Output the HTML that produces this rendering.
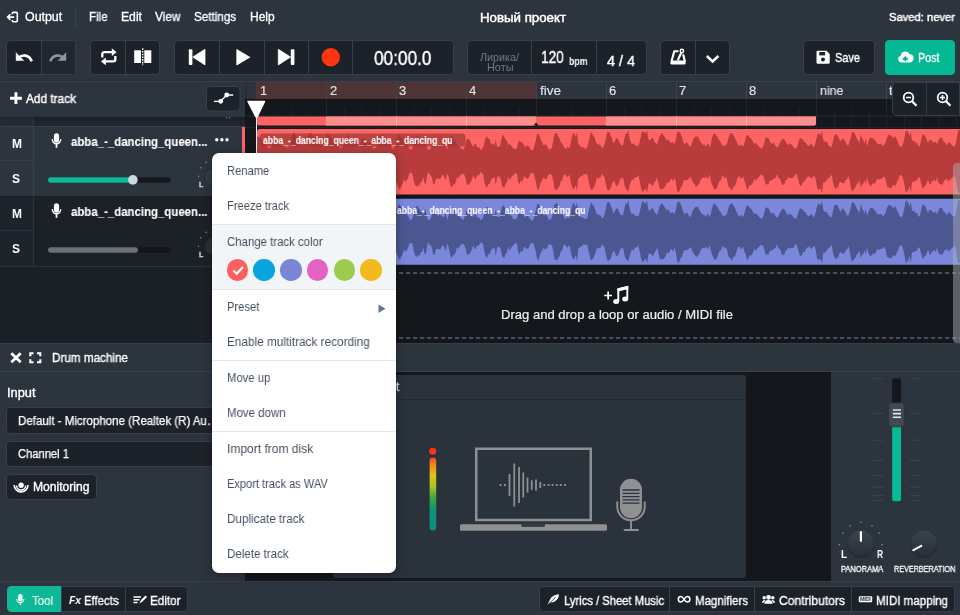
<!DOCTYPE html>
<html><head><meta charset="utf-8">
<style>
*{box-sizing:border-box;margin:0;padding:0}
html,body{width:960px;height:615px;overflow:hidden;background:#2c343e;font-family:"Liberation Sans",sans-serif;color:#fff}
.abs{position:absolute}
.t{position:absolute;white-space:nowrap;line-height:1;transform-origin:0 50%;-webkit-text-stroke:.3px;will-change:transform}
#menubar{left:0;top:0;width:960px;height:35px;background:#2c343e}
#toolbar{left:0;top:35px;width:960px;height:46px;background:#2c343e}
.grp{position:absolute;top:40px;height:34.500px;background:#1c2229;border-radius:4px;border:1px solid #363f4a}
.div{position:absolute;top:41px;height:32.500px;width:1px;background:#363f4a}
.menu{left:212px;top:153px;width:184px;height:420px;background:#fff;border-radius:7px;box-shadow:0 2px 10px rgba(0,0,0,.35)}
.mi{will-change:transform;position:absolute;left:227px;font-size:12.5px;color:#45505d;white-space:nowrap;line-height:1;transform-origin:0 50%}
.sep{position:absolute;left:212px;width:184px;height:1px;background:#dfe7ee}
.dot{position:absolute;width:21.4px;height:21.4px;border-radius:50%;top:259.4px}
.bb{position:absolute;top:586.3px;height:25.5px;background:#1c2229;border:1px solid #363f4a}
</style></head><body>

<!-- MENUBAR -->
<div class="abs" id="menubar"></div>
<svg class="abs" style="left:5px;top:9px" width="16" height="16" viewBox="5 9 16 16"><path d="M12.300 14.300V13.400a1 1 0 0 1 1-1H16.300a1 1 0 0 1 1 1V20.800a1 1 0 0 1-1 1H13.300a1 1 0 0 1-1-1V19.900" fill="none" stroke="#fff" stroke-width="1.600"/><path d="M14.200 17.100H7.800M10.400 14.300L7.600 17.100 10.400 19.900" fill="none" stroke="#fff" stroke-width="1.600"/></svg>
<div class="t" style="left:24.500px;top:11.300px;font-size:12px;transform:scaleX(1.0324)">Output</div>
<div class="abs" style="left:75px;top:8px;width:1px;height:21px;background:#3a434f"></div>
<div class="t" style="left:89.300px;top:11.300px;font-size:12px;transform:scaleX(0.9616)">File</div>
<div class="t" style="left:121px;top:11.300px;font-size:12px;transform:scaleX(1.0151)">Edit</div>
<div class="t" style="left:155px;top:11.300px;font-size:12px;transform:scaleX(0.9807)">View</div>
<div class="t" style="left:194px;top:11.300px;font-size:12px;transform:scaleX(0.9733)">Settings</div>
<div class="t" style="left:249.500px;top:11.300px;font-size:12px;transform:scaleX(0.9965)">Help</div>
<div class="t" style="left:479.500px;top:12px;font-size:12.500px;-webkit-text-stroke:.45px;transform:scaleX(1.0613)">Новый проект</div>
<div class="t" style="left:888.500px;top:12.200px;font-size:11.500px;-webkit-text-stroke:.45px;transform:scaleX(0.9739)">Saved: never</div>

<!-- TOOLBAR -->
<div class="grp" style="left:6px;width:70px"></div><div class="abs" style="left:42px;top:41px;width:33px;height:32.500px;background:#21272f;border-radius:0 3px 3px 0"></div><div class="div" style="left:41px"></div>
<div class="grp" style="left:90px;width:70px"></div><div class="div" style="left:125px"></div>
<div class="grp" style="left:174px;width:280px"></div>
<div class="div" style="left:219px"></div><div class="div" style="left:264px"></div><div class="div" style="left:308px"></div><div class="div" style="left:352px"></div>
<div class="grp" style="left:467px;width:180px"></div><div class="div" style="left:531px"></div><div class="div" style="left:596px"></div>
<div class="grp" style="left:660px;width:70px"></div><div class="div" style="left:695px"></div>
<div class="grp" style="left:803px;width:72px"></div>
<div class="grp" style="left:884.500px;width:70px;background:#05b895;border-color:#05b895"></div>

<!-- toolbar icons -->
<svg class="abs" style="left:0;top:35px" width="960" height="46" viewBox="0 35 960 46">
 <!-- undo -->
 <path d="M18.500 58.200C22 54 29 54.500 31.800 61.300" fill="none" stroke="#fff" stroke-width="2.600"/><path d="M15.800 52.300V60.800H24.300Z" fill="#fff"/>
 <!-- redo -->
 <path d="M63.500 58.200C60 54 53 54.500 50.200 61.300" fill="none" stroke="#8e959c" stroke-width="2.600"/><path d="M66.200 52.300V60.800H57.700Z" fill="#8e959c"/>
 <!-- loop -->
 <path d="M102.300 57.500V54a1.800 1.800 0 0 1 1.800-1.800H113" fill="none" stroke="#fff" stroke-width="2.300"/><path d="M111.800 48.300L116.600 52.200 111.800 56.100Z" fill="#fff"/>
 <path d="M115.300 56V59.600a1.800 1.800 0 0 1-1.800 1.800H104.500" fill="none" stroke="#fff" stroke-width="2.300"/><path d="M105.800 57.500L101 61.400 105.800 65.300Z" fill="#fff"/>
 <!-- split -->
 <rect x="134.200" y="50.300" width="6.800" height="12.700" fill="#fff"/><rect x="144.300" y="50.300" width="7" height="12.700" fill="#fff"/><path d="M142.700 48.300V65.300" stroke="#fff" stroke-width="1.400" stroke-dasharray="1.600 1.100"/>
 <!-- prev -->
 <rect x="188.800" y="49.300" width="3.600" height="15.600" rx="1" fill="#fff"/><path d="M205 49.300V64.900L192.800 57.100Z" fill="#fff" stroke="#fff" stroke-width=".8" stroke-linejoin="round"/>
 <!-- play -->
 <path d="M236.800 49.500V65L249.800 57.200Z" fill="#fff" stroke="#fff" stroke-width=".8" stroke-linejoin="round"/>
 <!-- next -->
 <rect x="290.800" y="49.300" width="3.600" height="15.600" rx="1" fill="#fff"/><path d="M278.300 49.300V64.900L290.500 57.100Z" fill="#fff" stroke="#fff" stroke-width=".8" stroke-linejoin="round"/>
 <!-- rec -->
 <circle cx="330.800" cy="57.200" r="9.200" fill="#ff3410"/>
 <!-- metronome -->
 <path d="M671.600 61L674.300 51.200H677.600" fill="none" stroke="#fff" stroke-width="2.100" stroke-linejoin="round" stroke-linecap="round"/>
 <path d="M683.300 55L684.800 61" fill="none" stroke="#fff" stroke-width="2.100" stroke-linecap="round"/>
 <path d="M677.800 60.300L681.200 52.800" stroke="#fff" stroke-width="2.100"/><circle cx="681.900" cy="51" r="1.700" fill="none" stroke="#fff" stroke-width="1.400"/>
 <path d="M671.200 60.400H685.200L685.700 63a1.200 1.200 0 0 1-1.200 1.400H671.500a1.200 1.200 0 0 1-1.200-1.400Z" fill="#fff"/>
 <!-- chevron -->
 <path d="M706.800 56L712.600 61.500 718.400 56" fill="none" stroke="#fff" stroke-width="2.500"/>
 <!-- save -->
 <path d="M816.500 52a1.200 1.200 0 0 1 1.200-1.200h8.800l3.200 3.200v8.600a1.200 1.200 0 0 1-1.200 1.200h-10.800a1.200 1.200 0 0 1-1.200-1.200Z" fill="#fff"/><rect x="819.300" y="52" width="5.800" height="3.400" fill="#1c2229"/><circle cx="823" cy="59.600" r="2" fill="#1c2229"/>
 <!-- cloud -->
 <path d="M901.500 62.400a3.400 3.400 0 0 1-.7-6.700 4.700 4.700 0 0 1 9-1.400 4.100 4.100 0 0 1 .6 8.100Z" fill="#fff"/><path d="M905.300 61.300V57.600M902.800 59.600L905.300 57.100 907.800 59.600" fill="none" stroke="#05b895" stroke-width="1.500"/>
</svg>
<div class="t" style="left:374px;top:47.600px;font-size:20px;-webkit-text-stroke:.4px;transform:scaleX(0.8616)">00:00.0</div>
<div class="t" style="left:479.800px;top:52.300px;font-size:10.500px;color:#727a83;-webkit-text-stroke:0;transform:scaleX(1.0251)">Лирика/</div>
<div class="t" style="left:487px;top:62.400px;font-size:10.500px;color:#727a83;-webkit-text-stroke:0;transform:scaleX(1.0367)">Ноты</div>
<div class="t" style="left:540.500px;top:48.500px;font-size:16.500px;-webkit-text-stroke:.4px;transform:scaleX(0.8281)">120</div>
<div class="t" style="left:568.800px;top:55.600px;font-size:11px;font-weight:bold;-webkit-text-stroke:0;transform:scaleX(0.7962)">bpm</div>
<div class="t" style="left:606.800px;top:53.500px;font-size:14.500px;-webkit-text-stroke:.4px;transform:scaleX(0.9922)">4 / 4</div>
<div class="t" style="left:835px;top:51.300px;font-size:13.500px;-webkit-text-stroke:.4px;transform:scaleX(0.8122)">Save</div>
<div class="t" style="left:917.700px;top:51.300px;font-size:13.500px;transform:scaleX(0.7958)">Post</div>

<!-- TIMELINE AREA -->
<div class="abs" style="left:0;top:81px;width:960px;height:262px;background:#14181c"></div>
<!-- ruler -->
<div class="abs" style="left:245px;top:81px;width:715px;height:18px;background:#2c343e;border-top:1px solid #353d48"></div>
<div class="abs" style="left:256px;top:82px;width:280px;height:17px;background:#4e3435"></div>
<div class="abs" style="left:245px;top:99px;width:715px;height:17px;background:#14181c"></div>
<svg class="abs" style="left:0;top:81px" width="960" height="50" viewBox="0 81 960 50">
 <g stroke="#3a434e" stroke-width="1"><path d="M326.5 82V99M396.5 82V99M466.5 82V99M536.5 82V99M606.5 82V99M676.5 82V99M746.5 82V99M816.5 82V99M886.5 82V99"/></g>
 <g stroke="#20262c" stroke-width="1"><path d="M326.5 99V116M396.5 99V116M466.5 99V116M536.5 99V116M606.5 99V116M676.5 99V116M746.5 99V116M816.5 99V116M886.5 99V116"/></g>
 <g stroke="#1c2127" stroke-width="1"><path d="M274.5 108V116M291.5 108V116M309.5 108V116M344.5 108V116M361.5 108V116M379.5 108V116M414.5 108V116M431.5 108V116M449.5 108V116M484.5 108V116M501.5 108V116M519.5 108V116M554.5 108V116M571.5 108V116M589.5 108V116M624.5 108V116M641.5 108V116M659.5 108V116M694.5 108V116M711.5 108V116M729.5 108V116M764.5 108V116M781.5 108V116M799.5 108V116M834.5 108V116M851.5 108V116M869.5 108V116M904.5 108V116M921.5 108V116M939.5 108V116"/></g>
 <path d="M256.5 116V129M274.5 116V129M291.5 116V129M309.5 116V129M326.5 116V129M344.5 116V129M361.5 116V129M379.5 116V129M396.5 116V129M414.5 116V129M431.5 116V129M449.5 116V129M466.5 116V129M484.5 116V129M501.5 116V129M519.5 116V129M536.5 116V129M554.5 116V129M571.5 116V129M589.5 116V129M606.5 116V129M624.5 116V129M641.5 116V129M659.5 116V129M676.5 116V129M694.5 116V129M711.5 116V129M729.5 116V129M746.5 116V129M764.5 116V129M781.5 116V129M799.5 116V129M816.5 116V129M834.5 116V129M851.5 116V129M869.5 116V129M886.5 116V129M904.5 116V129M921.5 116V129M939.5 116V129M956.5 116V129" stroke="#1d2329" stroke-width="1"/>
 <path d="M245 116H960" stroke="#242a31" stroke-width="1"/><path d="M245 127.500H960" stroke="#1f252b" stroke-width="1"/>
 <!-- section strip -->
 <path d="M257 116.500H536V125.500H259a2 2 0 0 1-2-2Z" fill="#ff6262"/>
 <rect x="326" y="116.500" width="210" height="9" fill="#ff8f8c"/>
 <path d="M536 116.500H816V123.500a2 2 0 0 1-2 2H538a2 2 0 0 1-2-2Z" fill="#ff6262"/>
 <path d="M606 116.500H816V123.500a2 2 0 0 1-2 2H606Z" fill="#ff8f8c"/>
 <path d="M533.500 125.500L536 122.500 538.500 125.500Z" fill="#14181c"/>
 <g stroke="#ffb0ad" stroke-width="1"><path d="M396.500 116.500V125.500M466.500 116.500V125.500M676.500 116.500V125.500M746.500 116.500V125.500"/></g>
</svg>
<div class="t" style="left:260px;top:84.200px;font-size:13px;color:#dfe3e7;-webkit-text-stroke:.15px">1</div>
<div class="t" style="left:330px;top:84.200px;font-size:13px;color:#dfe3e7;-webkit-text-stroke:.15px">2</div>
<div class="t" style="left:399px;top:84.200px;font-size:13px;color:#dfe3e7;-webkit-text-stroke:.15px">3</div>
<div class="t" style="left:469px;top:84.200px;font-size:13px;color:#dfe3e7;-webkit-text-stroke:.15px">4</div>
<div class="t" style="left:540px;top:84.200px;font-size:13px;color:#dfe3e7;-webkit-text-stroke:.15px;transform:scaleX(1.0378)">five</div>
<div class="t" style="left:609px;top:84.200px;font-size:13px;color:#dfe3e7;-webkit-text-stroke:.15px">6</div>
<div class="t" style="left:679px;top:84.200px;font-size:13px;color:#dfe3e7;-webkit-text-stroke:.15px">7</div>
<div class="t" style="left:749px;top:84.200px;font-size:13px;color:#dfe3e7;-webkit-text-stroke:.15px">8</div>
<div class="t" style="left:820px;top:84.200px;font-size:13px;color:#dfe3e7;-webkit-text-stroke:.15px;transform:scaleX(0.9561)">nine</div>
<div class="t" style="left:889px;top:84.200px;font-size:13px;color:#dfe3e7;-webkit-text-stroke:.15px">t</div>

<!-- CLIPS -->
<svg class="abs" style="left:245px;top:126px" width="715" height="220" viewBox="245 126 715 220">
 <rect x="257" y="129" width="710" height="65.500" rx="3" fill="#ff6464"/>
 <path d="M257.0 136.6 L258.2 136.6 L259.5 137.5 L260.8 139.4 L262.0 141.8 L263.2 144.3 L264.5 143.5 L265.8 143.7 L267.0 145.8 L268.2 148.2 L269.5 147.8 L270.8 147.6 L272.0 145.6 L273.2 140.7 L274.5 138.5 L275.8 139.1 L277.0 140.7 L278.2 142.7 L279.5 143.3 L280.8 146.0 L282.0 146.1 L283.2 145.4 L284.5 146.1 L285.8 146.5 L287.0 147.6 L288.2 147.4 L289.5 146.4 L290.8 140.8 L292.0 135.5 L293.2 132.6 L294.5 133.1 L295.8 135.1 L297.0 138.3 L298.2 141.0 L299.5 144.3 L300.8 145.9 L302.0 145.7 L303.2 145.7 L304.5 138.7 L305.8 147.1 L307.0 143.7 L308.2 137.1 L309.5 132.6 L310.8 133.1 L312.0 134.0 L313.2 136.7 L314.5 138.6 L315.8 134.0 L317.0 143.2 L318.2 142.4 L319.5 144.3 L320.8 144.9 L322.0 145.4 L323.2 146.9 L324.5 143.8 L325.8 139.9 L327.0 134.0 L328.2 133.8 L329.5 135.8 L330.8 137.3 L332.0 139.6 L333.2 142.2 L334.5 135.7 L335.8 143.7 L337.0 143.8 L338.2 145.1 L339.5 147.3 L340.8 147.9 L342.0 146.9 L343.2 144.1 L344.5 139.3 L345.8 136.7 L347.0 138.0 L348.2 131.8 L349.5 141.4 L350.8 143.2 L352.0 143.6 L353.2 141.2 L354.5 139.2 L355.8 142.4 L357.0 143.6 L358.2 146.5 L359.5 145.5 L360.8 142.9 L362.0 139.0 L363.2 137.9 L364.5 138.1 L365.8 140.9 L367.0 141.5 L368.2 143.6 L369.5 142.6 L370.8 143.0 L372.0 145.4 L373.2 148.4 L374.5 148.0 L375.8 148.1 L377.0 145.3 L378.2 140.4 L379.5 136.0 L380.8 134.9 L382.0 133.9 L383.2 135.1 L384.5 138.3 L385.8 140.7 L387.0 140.1 L388.2 140.8 L389.5 142.3 L390.8 145.2 L392.0 148.0 L393.2 148.5 L394.5 146.4 L395.8 143.9 L397.0 138.9 L398.2 135.3 L399.5 134.4 L400.8 136.4 L402.0 137.9 L403.2 139.8 L404.5 142.5 L405.8 141.1 L407.0 144.5 L408.2 145.6 L409.5 148.9 L410.8 149.8 L412.0 149.0 L413.2 145.7 L414.5 139.8 L415.8 136.7 L417.0 135.8 L418.2 137.0 L419.5 138.7 L420.8 141.0 L422.0 142.2 L423.2 145.1 L424.5 139.4 L425.8 140.4 L427.0 147.4 L428.2 150.2 L429.5 149.5 L430.8 148.1 L432.0 144.9 L433.2 139.7 L434.5 140.1 L435.8 142.6 L437.0 144.7 L438.2 145.7 L439.5 144.4 L440.8 144.7 L442.0 146.2 L443.2 147.1 L444.5 145.8 L445.8 141.0 L447.0 149.7 L448.2 146.7 L449.5 142.0 L450.8 135.7 L452.0 136.1 L453.2 138.1 L454.5 139.8 L455.8 142.4 L457.0 145.4 L458.2 146.0 L459.5 145.9 L460.8 148.4 L462.0 148.4 L463.2 150.2 L464.5 146.9 L465.8 143.6 L467.0 138.7 L468.2 139.2 L469.5 139.6 L470.8 142.8 L472.0 145.1 L473.2 147.2 L474.5 143.9 L475.8 144.1 L477.0 147.1 L478.2 147.6 L479.5 147.6 L480.8 150.3 L482.0 148.7 L483.2 147.5 L484.5 142.2 L485.8 137.2 L487.0 136.4 L488.2 138.6 L489.5 139.0 L490.8 142.9 L492.0 144.4 L493.2 143.6 L494.5 145.3 L495.8 139.2 L497.0 146.8 L498.2 146.5 L499.5 147.0 L500.8 142.5 L502.0 136.8 L503.2 134.7 L504.5 136.9 L505.8 139.7 L507.0 140.8 L508.2 145.0 L509.5 143.8 L510.8 145.2 L512.0 146.5 L513.2 149.0 L514.5 148.5 L515.8 149.3 L517.0 147.8 L518.2 142.5 L519.5 140.2 L520.8 141.9 L522.0 142.4 L523.2 143.4 L524.5 146.7 L525.8 146.4 L527.0 145.5 L528.2 145.7 L529.5 147.5 L530.8 149.7 L532.0 150.3 L533.2 150.0 L534.5 145.3 L535.8 140.2 L537.0 134.2 L538.2 133.6 L539.5 135.4 L540.8 139.9 L542.0 142.0 L543.2 144.9 L544.5 144.7 L545.8 144.4 L547.0 145.6 L548.2 148.7 L549.5 149.5 L550.8 149.2 L552.0 146.9 L553.2 141.3 L554.5 134.0 L555.8 133.2 L557.0 132.9 L558.2 136.4 L559.5 138.3 L560.8 142.2 L562.0 143.4 L563.2 145.2 L564.5 147.8 L565.8 148.9 L567.0 147.1 L568.2 147.7 L569.5 147.7 L570.8 142.4 L572.0 136.5 L573.2 132.5 L574.5 134.0 L575.8 136.9 L577.0 132.1 L578.2 143.2 L579.5 145.5 L580.8 146.8 L582.0 147.2 L583.2 147.2 L584.5 148.7 L585.8 148.3 L587.0 148.3 L588.2 143.3 L589.5 137.6 L590.8 132.1 L592.0 133.4 L593.2 135.6 L594.5 137.2 L595.8 141.7 L597.0 144.3 L598.2 144.1 L599.5 144.8 L600.8 145.6 L602.0 147.9 L603.2 147.8 L604.5 144.6 L605.8 139.0 L607.0 132.5 L608.2 131.9 L609.5 132.3 L610.8 135.9 L612.0 138.3 L613.2 143.0 L614.5 141.9 L615.8 138.9 L617.0 138.1 L618.2 139.3 L619.5 142.5 L620.8 144.8 L622.0 145.4 L623.2 144.6 L624.5 137.9 L625.8 133.3 L627.0 133.9 L628.2 130.0 L629.5 137.9 L630.8 141.9 L632.0 144.4 L633.2 142.9 L634.5 144.7 L635.8 145.8 L637.0 145.6 L638.2 146.6 L639.5 142.8 L640.8 137.1 L642.0 131.4 L643.2 131.4 L644.5 132.3 L645.8 133.2 L647.0 130.0 L648.2 138.5 L649.5 140.8 L650.8 139.2 L652.0 137.7 L653.2 138.6 L654.5 141.9 L655.8 143.0 L657.0 144.7 L658.2 141.1 L659.5 136.4 L660.8 134.4 L662.0 132.7 L663.2 134.7 L664.5 136.7 L665.8 138.5 L667.0 140.9 L668.2 138.9 L669.5 141.2 L670.8 142.9 L672.0 142.4 L673.2 142.1 L674.5 144.4 L675.8 140.0 L677.0 133.3 L678.2 131.2 L679.5 132.1 L680.8 134.1 L682.0 137.2 L683.2 141.6 L684.5 144.5 L685.8 142.8 L687.0 142.4 L688.2 144.5 L689.5 146.0 L690.8 146.8 L692.0 142.9 L693.2 139.6 L694.5 137.5 L695.8 136.6 L697.0 136.6 L698.2 137.0 L699.5 140.0 L700.8 142.2 L702.0 143.4 L703.2 144.9 L704.5 144.8 L705.8 146.8 L707.0 144.4 L708.2 143.2 L709.5 147.4 L710.8 143.9 L712.0 138.3 L713.2 134.6 L714.5 133.1 L715.8 134.7 L717.0 136.4 L718.2 138.2 L719.5 140.5 L720.8 142.3 L722.0 144.9 L723.2 146.1 L724.5 145.4 L725.8 145.4 L727.0 143.7 L728.2 138.5 L729.5 134.7 L730.8 133.3 L732.0 133.0 L733.2 135.0 L734.5 136.9 L735.8 140.1 L737.0 142.5 L738.2 145.3 L739.5 146.2 L740.8 145.1 L742.0 145.1 L743.2 147.0 L744.5 142.7 L745.8 137.8 L747.0 134.7 L748.2 135.8 L749.5 137.2 L750.8 138.5 L752.0 139.2 L753.2 142.6 L754.5 143.7 L755.8 142.8 L757.0 144.4 L758.2 145.5 L759.5 147.2 L760.8 148.2 L762.0 148.3 L763.2 146.5 L764.5 141.4 L765.8 136.8 L767.0 138.1 L768.2 137.3 L769.5 140.6 L770.8 142.9 L772.0 143.9 L773.2 142.4 L774.5 144.3 L775.8 146.2 L777.0 147.8 L778.2 146.6 L779.5 143.2 L780.8 141.0 L782.0 139.6 L783.2 138.4 L784.5 139.4 L785.8 141.9 L787.0 143.9 L788.2 145.2 L789.5 143.3 L790.8 144.3 L792.0 144.7 L793.2 147.0 L794.5 148.0 L795.8 148.6 L797.0 147.3 L798.2 142.8 L799.5 138.7 L800.8 138.1 L802.0 138.9 L803.2 140.1 L804.5 141.9 L805.8 142.4 L807.0 145.1 L808.2 145.5 L809.5 146.1 L810.8 144.1 L812.0 143.7 L813.2 147.2 L814.5 146.1 L815.8 141.6 L817.0 136.2 L818.2 133.1 L819.5 134.1 L820.8 135.1 L822.0 130.3 L823.2 139.7 L824.5 141.5 L825.8 141.5 L827.0 142.1 L828.2 144.8 L829.5 146.1 L830.8 147.5 L832.0 145.9 L833.2 140.1 L834.5 135.1 L835.8 134.3 L837.0 134.8 L838.2 136.8 L839.5 139.5 L840.8 141.8 L842.0 138.6 L843.2 138.9 L844.5 140.0 L845.8 142.6 L847.0 145.0 L848.2 145.8 L849.5 142.3 L850.8 137.5 L852.0 131.8 L853.2 132.2 L854.5 133.0 L855.8 136.0 L857.0 139.0 L858.2 140.2 L859.5 143.1 L860.8 133.9 L862.0 138.3 L863.2 140.0 L864.5 143.6 L865.8 138.2 L867.0 146.3 L868.2 142.2 L869.5 139.0 L870.8 137.2 L872.0 137.9 L873.2 138.4 L874.5 140.1 L875.8 141.1 L877.0 143.5 L878.2 144.3 L879.5 144.0 L880.8 143.5 L882.0 144.9 L883.2 146.3 L884.5 144.3 L885.8 142.0 L887.0 137.5 L888.2 135.0 L889.5 134.7 L890.8 135.2 L892.0 136.6 L893.2 138.5 L894.5 135.9 L895.8 137.6 L897.0 140.0 L898.2 142.4 L899.5 146.3 L900.8 146.6 L902.0 146.7 L903.2 143.2 L904.5 137.4 L905.8 130.5 L907.0 130.8 L908.2 132.2 L909.5 136.3 L910.8 131.3 L912.0 140.7 L913.2 140.4 L914.5 141.0 L915.8 143.4 L917.0 142.2 L918.2 145.9 L919.5 146.6 L920.8 142.0 L922.0 135.9 L923.2 134.0 L924.5 135.4 L925.8 136.9 L927.0 140.7 L928.2 142.8 L929.5 139.2 L930.8 140.1 L932.0 140.7 L933.2 142.8 L934.5 142.2 L935.8 141.4 L937.0 144.5 L938.2 140.8 L939.5 137.9 L940.8 137.7 L942.0 137.8 L943.2 141.0 L944.5 141.9 L945.8 143.6 L947.0 145.2 L948.2 142.0 L949.5 142.2 L950.8 143.9 L952.0 145.3 L953.2 146.0 L954.5 146.8 L955.8 143.5 L957.0 136.6 L958.2 130.5 L959.5 130.0 L960.8 131.1 L962.0 134.2 L962.0 188.7 L960.8 190.3 L959.5 193.0 L958.2 192.5 L957.0 186.3 L955.8 179.4 L954.5 175.3 L953.2 177.1 L952.0 177.5 L950.8 179.2 L949.5 179.8 L948.2 181.9 L947.0 178.3 L945.8 179.7 L944.5 180.0 L943.2 183.3 L942.0 184.8 L940.8 184.4 L939.5 183.8 L938.2 182.7 L937.0 176.9 L935.8 182.0 L934.5 179.6 L933.2 181.5 L932.0 180.8 L930.8 184.3 L929.5 184.3 L928.2 179.9 L927.0 181.7 L925.8 185.4 L924.5 185.9 L923.2 188.7 L922.0 186.7 L920.8 182.1 L919.5 177.5 L918.2 177.3 L917.0 180.7 L915.8 180.6 L914.5 181.5 L913.2 181.7 L912.0 182.2 L910.8 192.7 L909.5 185.5 L908.2 190.5 L907.0 191.3 L905.8 193.0 L904.5 184.7 L903.2 179.4 L902.0 176.1 L900.8 174.8 L899.5 176.0 L898.2 180.1 L897.0 181.7 L895.8 185.1 L894.5 186.2 L893.2 184.2 L892.0 187.4 L890.8 187.9 L889.5 188.4 L888.2 186.7 L887.0 187.0 L885.8 179.9 L884.5 177.2 L883.2 176.7 L882.0 179.0 L880.8 178.5 L879.5 179.6 L878.2 179.1 L877.0 179.2 L875.8 182.3 L874.5 183.8 L873.2 183.3 L872.0 184.5 L870.8 186.2 L869.5 185.1 L868.2 181.7 L867.0 177.4 L865.8 184.5 L864.5 179.7 L863.2 184.3 L862.0 184.4 L860.8 187.9 L859.5 180.3 L858.2 183.4 L857.0 183.6 L855.8 186.6 L854.5 188.7 L853.2 189.8 L852.0 191.9 L850.8 187.1 L849.5 179.4 L848.2 175.9 L847.0 179.5 L845.8 179.8 L844.5 183.1 L843.2 183.3 L842.0 183.3 L840.8 181.8 L839.5 182.5 L838.2 187.5 L837.0 187.0 L835.8 189.6 L834.5 186.8 L833.2 183.4 L832.0 175.9 L830.8 175.0 L829.5 177.7 L828.2 178.3 L827.0 180.1 L825.8 181.1 L824.5 182.8 L823.2 182.3 L822.0 193.0 L820.8 189.2 L819.5 188.6 L818.2 190.3 L817.0 187.5 L815.8 180.1 L814.5 175.7 L813.2 176.5 L812.0 178.6 L810.8 178.1 L809.5 176.4 L808.2 176.5 L807.0 177.8 L805.8 179.0 L804.5 182.0 L803.2 181.3 L802.0 185.1 L800.8 186.1 L799.5 184.5 L798.2 179.7 L797.0 175.5 L795.8 172.9 L794.5 176.2 L793.2 177.5 L792.0 177.9 L790.8 178.0 L789.5 178.2 L788.2 177.2 L787.0 180.0 L785.8 179.8 L784.5 184.0 L783.2 185.0 L782.0 184.5 L780.8 180.7 L779.5 178.5 L778.2 177.8 L777.0 173.8 L775.8 177.9 L774.5 178.3 L773.2 179.2 L772.0 179.7 L770.8 180.7 L769.5 180.8 L768.2 185.2 L767.0 183.6 L765.8 185.1 L764.5 180.3 L763.2 175.5 L762.0 175.0 L760.8 174.6 L759.5 176.4 L758.2 177.4 L757.0 179.1 L755.8 180.7 L754.5 178.4 L753.2 181.7 L752.0 184.6 L750.8 185.3 L749.5 185.0 L748.2 188.5 L747.0 189.8 L745.8 184.4 L744.5 181.2 L743.2 176.2 L742.0 178.6 L740.8 178.5 L739.5 176.3 L738.2 176.8 L737.0 179.6 L735.8 183.7 L734.5 186.9 L733.2 186.4 L732.0 190.9 L730.8 188.2 L729.5 187.7 L728.2 185.5 L727.0 179.3 L725.8 176.6 L724.5 179.1 L723.2 175.4 L722.0 176.7 L720.8 180.4 L719.5 181.1 L718.2 183.9 L717.0 188.0 L715.8 188.8 L714.5 190.1 L713.2 186.8 L712.0 184.4 L710.8 180.3 L709.5 174.2 L708.2 179.0 L707.0 177.5 L705.8 176.6 L704.5 178.4 L703.2 177.2 L702.0 178.4 L700.8 179.2 L699.5 183.5 L698.2 184.8 L697.0 186.4 L695.8 186.8 L694.5 184.0 L693.2 182.8 L692.0 180.4 L690.8 176.7 L689.5 178.1 L688.2 179.3 L687.0 180.4 L685.8 179.8 L684.5 180.1 L683.2 182.3 L682.0 186.2 L680.8 187.6 L679.5 191.1 L678.2 193.0 L677.0 190.1 L675.8 181.7 L674.5 177.6 L673.2 181.5 L672.0 179.5 L670.8 178.6 L669.5 181.8 L668.2 183.2 L667.0 182.1 L665.8 185.5 L664.5 187.6 L663.2 189.1 L662.0 188.9 L660.8 189.5 L659.5 187.9 L658.2 181.9 L657.0 177.3 L655.8 180.7 L654.5 182.3 L653.2 185.9 L652.0 185.3 L650.8 183.9 L649.5 183.0 L648.2 184.9 L647.0 193.0 L645.8 188.5 L644.5 189.5 L643.2 191.5 L642.0 191.5 L640.8 186.7 L639.5 180.1 L638.2 174.9 L637.0 177.2 L635.8 176.9 L634.5 178.1 L633.2 180.5 L632.0 178.9 L630.8 182.2 L629.5 185.9 L628.2 191.5 L627.0 189.8 L625.8 188.5 L624.5 185.2 L623.2 177.5 L622.0 178.6 L620.8 177.9 L619.5 181.4 L618.2 184.8 L617.0 186.2 L615.8 185.4 L614.5 181.0 L613.2 181.4 L612.0 183.8 L610.8 188.1 L609.5 189.5 L608.2 191.1 L607.0 189.3 L605.8 183.6 L604.5 177.1 L603.2 175.7 L602.0 173.5 L600.8 177.3 L599.5 177.8 L598.2 178.7 L597.0 177.0 L595.8 182.0 L594.5 185.4 L593.2 188.6 L592.0 189.2 L590.8 190.3 L589.5 184.7 L588.2 179.4 L587.0 173.6 L585.8 175.1 L584.5 174.0 L583.2 174.4 L582.0 176.8 L580.8 175.5 L579.5 178.1 L578.2 178.2 L577.0 191.4 L575.8 185.3 L574.5 187.8 L573.2 189.6 L572.0 186.8 L570.8 182.1 L569.5 174.5 L568.2 176.5 L567.0 177.3 L565.8 175.6 L564.5 173.9 L563.2 176.3 L562.0 180.7 L560.8 180.7 L559.5 186.3 L558.2 187.6 L557.0 190.2 L555.8 189.5 L554.5 189.3 L553.2 180.5 L552.0 175.3 L550.8 174.6 L549.5 173.8 L548.2 175.4 L547.0 178.0 L545.8 179.4 L544.5 178.7 L543.2 177.3 L542.0 181.6 L540.8 181.8 L539.5 186.9 L538.2 190.7 L537.0 188.2 L535.8 181.3 L534.5 176.9 L533.2 172.0 L532.0 173.6 L530.8 172.7 L529.5 175.9 L528.2 178.4 L527.0 178.5 L525.8 178.0 L524.5 176.1 L523.2 179.2 L522.0 182.0 L520.8 180.2 L519.5 184.2 L518.2 181.9 L517.0 173.6 L515.8 173.1 L514.5 173.8 L513.2 175.5 L512.0 176.0 L510.8 178.6 L509.5 180.5 L508.2 176.5 L507.0 183.1 L505.8 183.0 L504.5 187.4 L503.2 187.3 L502.0 185.8 L500.8 179.0 L499.5 177.0 L498.2 176.0 L497.0 177.7 L495.8 185.3 L494.5 177.0 L493.2 178.3 L492.0 178.2 L490.8 180.7 L489.5 184.8 L488.2 183.4 L487.0 188.0 L485.8 186.6 L484.5 182.1 L483.2 174.0 L482.0 173.2 L480.8 171.8 L479.5 174.2 L478.2 175.9 L477.0 175.0 L475.8 178.9 L474.5 178.4 L473.2 174.9 L472.0 179.0 L470.8 181.7 L469.5 183.4 L468.2 184.8 L467.0 184.9 L465.8 178.9 L464.5 175.2 L463.2 173.4 L462.0 174.4 L460.8 174.6 L459.5 176.5 L458.2 178.5 L457.0 176.7 L455.8 181.9 L454.5 184.7 L453.2 184.2 L452.0 187.2 L450.8 187.0 L449.5 181.1 L448.2 175.1 L447.0 173.7 L445.8 180.8 L444.5 177.7 L443.2 175.1 L442.0 175.3 L440.8 178.2 L439.5 179.1 L438.2 178.8 L437.0 178.4 L435.8 179.2 L434.5 184.5 L433.2 184.3 L432.0 177.8 L430.8 175.2 L429.5 174.7 L428.2 171.3 L427.0 176.8 L425.8 184.1 L424.5 183.3 L423.2 177.1 L422.0 181.9 L420.8 182.0 L419.5 185.8 L418.2 184.6 L417.0 186.8 L415.8 186.0 L414.5 184.0 L413.2 177.5 L412.0 173.1 L410.8 172.7 L409.5 173.1 L408.2 177.2 L407.0 179.9 L405.8 181.9 L404.5 179.6 L403.2 182.1 L402.0 185.3 L400.8 187.1 L399.5 190.1 L398.2 187.1 L397.0 184.0 L395.8 180.5 L394.5 175.9 L393.2 175.3 L392.0 175.7 L390.8 178.6 L389.5 182.1 L388.2 182.6 L387.0 184.2 L385.8 181.9 L384.5 184.7 L383.2 187.1 L382.0 188.4 L380.8 186.8 L379.5 186.3 L378.2 182.2 L377.0 179.3 L375.8 174.5 L374.5 176.3 L373.2 176.0 L372.0 178.7 L370.8 178.4 L369.5 179.8 L368.2 178.3 L367.0 181.3 L365.8 180.5 L364.5 184.9 L363.2 184.3 L362.0 185.3 L360.8 181.2 L359.5 178.9 L358.2 175.4 L357.0 178.5 L355.8 179.7 L354.5 183.6 L353.2 182.8 L352.0 177.8 L350.8 181.3 L349.5 182.8 L348.2 191.1 L347.0 185.0 L345.8 186.9 L344.5 184.2 L343.2 177.5 L342.0 176.3 L340.8 175.9 L339.5 174.6 L338.2 178.4 L337.0 180.1 L335.8 179.2 L334.5 187.3 L333.2 181.6 L332.0 184.1 L330.8 184.3 L329.5 188.0 L328.2 189.7 L327.0 189.0 L325.8 184.0 L324.5 179.2 L323.2 176.5 L322.0 177.8 L320.8 176.8 L319.5 177.5 L318.2 179.7 L317.0 180.4 L315.8 189.3 L314.5 185.4 L313.2 186.3 L312.0 187.8 L310.8 190.7 L309.5 191.6 L308.2 184.5 L307.0 180.0 L305.8 177.5 L304.5 183.9 L303.2 178.0 L302.0 178.1 L300.8 177.3 L299.5 178.1 L298.2 180.5 L297.0 183.3 L295.8 186.3 L294.5 188.9 L293.2 190.3 L292.0 185.8 L290.8 181.6 L289.5 175.7 L288.2 177.2 L287.0 174.7 L285.8 175.4 L284.5 176.2 L283.2 176.9 L282.0 178.1 L280.8 175.6 L279.5 178.9 L278.2 178.9 L277.0 180.9 L275.8 183.6 L274.5 185.2 L273.2 181.8 L272.0 178.0 L270.8 175.1 L269.5 175.2 L268.2 175.8 L267.0 178.6 L265.8 178.3 L264.5 180.2 L263.2 177.9 L262.0 180.7 L260.8 183.6 L259.5 186.3 L258.2 185.8 L257.0 185.0 Z" fill="#b83c3c"/>
 <rect x="257" y="198.800" width="710" height="66" rx="3" fill="#7a87da"/>
 <path d="M257.0 206.8 L258.2 206.8 L259.5 207.7 L260.8 209.6 L262.0 212.0 L263.2 214.5 L264.5 213.7 L265.8 213.9 L267.0 216.0 L268.2 218.4 L269.5 218.0 L270.8 217.8 L272.0 215.8 L273.2 210.9 L274.5 208.7 L275.8 209.3 L277.0 210.9 L278.2 212.9 L279.5 213.5 L280.8 216.2 L282.0 216.3 L283.2 215.6 L284.5 216.3 L285.8 216.7 L287.0 217.8 L288.2 217.6 L289.5 216.6 L290.8 211.0 L292.0 205.7 L293.2 202.8 L294.5 203.3 L295.8 205.3 L297.0 208.5 L298.2 211.2 L299.5 214.5 L300.8 216.1 L302.0 215.9 L303.2 215.9 L304.5 208.9 L305.8 217.3 L307.0 213.9 L308.2 207.3 L309.5 202.8 L310.8 203.3 L312.0 204.2 L313.2 206.9 L314.5 208.8 L315.8 204.2 L317.0 213.4 L318.2 212.6 L319.5 214.5 L320.8 215.1 L322.0 215.6 L323.2 217.1 L324.5 214.0 L325.8 210.1 L327.0 204.2 L328.2 204.0 L329.5 206.0 L330.8 207.5 L332.0 209.8 L333.2 212.4 L334.5 205.9 L335.8 213.9 L337.0 214.0 L338.2 215.3 L339.5 217.5 L340.8 218.1 L342.0 217.1 L343.2 214.3 L344.5 209.5 L345.8 206.9 L347.0 208.2 L348.2 202.0 L349.5 211.6 L350.8 213.4 L352.0 213.8 L353.2 211.4 L354.5 209.4 L355.8 212.6 L357.0 213.8 L358.2 216.7 L359.5 215.7 L360.8 213.1 L362.0 209.2 L363.2 208.1 L364.5 208.3 L365.8 211.1 L367.0 211.7 L368.2 213.8 L369.5 212.8 L370.8 213.2 L372.0 215.6 L373.2 218.6 L374.5 218.2 L375.8 218.3 L377.0 215.5 L378.2 210.6 L379.5 206.2 L380.8 205.1 L382.0 204.1 L383.2 205.3 L384.5 208.5 L385.8 210.9 L387.0 210.3 L388.2 211.0 L389.5 212.5 L390.8 215.4 L392.0 218.2 L393.2 218.7 L394.5 216.6 L395.8 214.1 L397.0 209.1 L398.2 205.5 L399.5 204.6 L400.8 206.6 L402.0 208.1 L403.2 210.0 L404.5 212.7 L405.8 211.3 L407.0 214.7 L408.2 215.8 L409.5 219.1 L410.8 220.0 L412.0 219.2 L413.2 215.9 L414.5 210.0 L415.8 206.9 L417.0 206.0 L418.2 207.2 L419.5 208.9 L420.8 211.2 L422.0 212.4 L423.2 215.3 L424.5 209.6 L425.8 210.6 L427.0 217.6 L428.2 220.4 L429.5 219.7 L430.8 218.3 L432.0 215.1 L433.2 209.9 L434.5 210.3 L435.8 212.8 L437.0 214.9 L438.2 215.9 L439.5 214.6 L440.8 214.9 L442.0 216.4 L443.2 217.3 L444.5 216.0 L445.8 211.2 L447.0 219.9 L448.2 216.9 L449.5 212.2 L450.8 205.9 L452.0 206.3 L453.2 208.3 L454.5 210.0 L455.8 212.6 L457.0 215.6 L458.2 216.2 L459.5 216.1 L460.8 218.6 L462.0 218.6 L463.2 220.4 L464.5 217.1 L465.8 213.8 L467.0 208.9 L468.2 209.4 L469.5 209.8 L470.8 213.0 L472.0 215.3 L473.2 217.4 L474.5 214.1 L475.8 214.3 L477.0 217.3 L478.2 217.8 L479.5 217.8 L480.8 220.5 L482.0 218.9 L483.2 217.7 L484.5 212.4 L485.8 207.4 L487.0 206.6 L488.2 208.8 L489.5 209.2 L490.8 213.1 L492.0 214.6 L493.2 213.8 L494.5 215.5 L495.8 209.4 L497.0 217.0 L498.2 216.7 L499.5 217.2 L500.8 212.7 L502.0 207.0 L503.2 204.9 L504.5 207.1 L505.8 209.9 L507.0 211.0 L508.2 215.2 L509.5 214.0 L510.8 215.4 L512.0 216.7 L513.2 219.2 L514.5 218.7 L515.8 219.5 L517.0 218.0 L518.2 212.7 L519.5 210.4 L520.8 212.1 L522.0 212.6 L523.2 213.6 L524.5 216.9 L525.8 216.6 L527.0 215.7 L528.2 215.9 L529.5 217.7 L530.8 219.9 L532.0 220.5 L533.2 220.2 L534.5 215.5 L535.8 210.4 L537.0 204.4 L538.2 203.8 L539.5 205.6 L540.8 210.1 L542.0 212.2 L543.2 215.1 L544.5 214.9 L545.8 214.6 L547.0 215.8 L548.2 218.9 L549.5 219.7 L550.8 219.4 L552.0 217.1 L553.2 211.5 L554.5 204.2 L555.8 203.4 L557.0 203.1 L558.2 206.6 L559.5 208.5 L560.8 212.4 L562.0 213.6 L563.2 215.4 L564.5 218.0 L565.8 219.1 L567.0 217.3 L568.2 217.9 L569.5 217.9 L570.8 212.6 L572.0 206.7 L573.2 202.7 L574.5 204.2 L575.8 207.1 L577.0 202.3 L578.2 213.4 L579.5 215.7 L580.8 217.0 L582.0 217.4 L583.2 217.4 L584.5 218.9 L585.8 218.5 L587.0 218.5 L588.2 213.5 L589.5 207.8 L590.8 202.3 L592.0 203.6 L593.2 205.8 L594.5 207.4 L595.8 211.9 L597.0 214.5 L598.2 214.3 L599.5 215.0 L600.8 215.8 L602.0 218.1 L603.2 218.0 L604.5 214.8 L605.8 209.2 L607.0 202.7 L608.2 202.1 L609.5 202.5 L610.8 206.1 L612.0 208.5 L613.2 213.2 L614.5 212.1 L615.8 209.1 L617.0 208.3 L618.2 209.5 L619.5 212.7 L620.8 215.0 L622.0 215.6 L623.2 214.8 L624.5 208.1 L625.8 203.5 L627.0 204.1 L628.2 200.2 L629.5 208.1 L630.8 212.1 L632.0 214.6 L633.2 213.1 L634.5 214.9 L635.8 216.0 L637.0 215.8 L638.2 216.8 L639.5 213.0 L640.8 207.3 L642.0 201.6 L643.2 201.6 L644.5 202.5 L645.8 203.4 L647.0 200.2 L648.2 208.7 L649.5 211.0 L650.8 209.4 L652.0 207.9 L653.2 208.8 L654.5 212.1 L655.8 213.2 L657.0 214.9 L658.2 211.3 L659.5 206.6 L660.8 204.6 L662.0 202.9 L663.2 204.9 L664.5 206.9 L665.8 208.7 L667.0 211.1 L668.2 209.1 L669.5 211.4 L670.8 213.1 L672.0 212.6 L673.2 212.3 L674.5 214.6 L675.8 210.2 L677.0 203.5 L678.2 201.4 L679.5 202.3 L680.8 204.3 L682.0 207.4 L683.2 211.8 L684.5 214.7 L685.8 213.0 L687.0 212.6 L688.2 214.7 L689.5 216.2 L690.8 217.0 L692.0 213.1 L693.2 209.8 L694.5 207.7 L695.8 206.8 L697.0 206.8 L698.2 207.2 L699.5 210.2 L700.8 212.4 L702.0 213.6 L703.2 215.1 L704.5 215.0 L705.8 217.0 L707.0 214.6 L708.2 213.4 L709.5 217.6 L710.8 214.1 L712.0 208.5 L713.2 204.8 L714.5 203.3 L715.8 204.9 L717.0 206.6 L718.2 208.4 L719.5 210.7 L720.8 212.5 L722.0 215.1 L723.2 216.3 L724.5 215.6 L725.8 215.6 L727.0 213.9 L728.2 208.7 L729.5 204.9 L730.8 203.5 L732.0 203.2 L733.2 205.2 L734.5 207.1 L735.8 210.3 L737.0 212.7 L738.2 215.5 L739.5 216.4 L740.8 215.3 L742.0 215.3 L743.2 217.2 L744.5 212.9 L745.8 208.0 L747.0 204.9 L748.2 206.0 L749.5 207.4 L750.8 208.7 L752.0 209.4 L753.2 212.8 L754.5 213.9 L755.8 213.0 L757.0 214.6 L758.2 215.7 L759.5 217.4 L760.8 218.4 L762.0 218.5 L763.2 216.7 L764.5 211.6 L765.8 207.0 L767.0 208.3 L768.2 207.5 L769.5 210.8 L770.8 213.1 L772.0 214.1 L773.2 212.6 L774.5 214.5 L775.8 216.4 L777.0 218.0 L778.2 216.8 L779.5 213.4 L780.8 211.2 L782.0 209.8 L783.2 208.6 L784.5 209.6 L785.8 212.1 L787.0 214.1 L788.2 215.4 L789.5 213.5 L790.8 214.5 L792.0 214.9 L793.2 217.2 L794.5 218.2 L795.8 218.8 L797.0 217.5 L798.2 213.0 L799.5 208.9 L800.8 208.3 L802.0 209.1 L803.2 210.3 L804.5 212.1 L805.8 212.6 L807.0 215.3 L808.2 215.7 L809.5 216.3 L810.8 214.3 L812.0 213.9 L813.2 217.4 L814.5 216.3 L815.8 211.8 L817.0 206.4 L818.2 203.3 L819.5 204.3 L820.8 205.3 L822.0 200.5 L823.2 209.9 L824.5 211.7 L825.8 211.7 L827.0 212.3 L828.2 215.0 L829.5 216.3 L830.8 217.7 L832.0 216.1 L833.2 210.3 L834.5 205.3 L835.8 204.5 L837.0 205.0 L838.2 207.0 L839.5 209.7 L840.8 212.0 L842.0 208.8 L843.2 209.1 L844.5 210.2 L845.8 212.8 L847.0 215.2 L848.2 216.0 L849.5 212.5 L850.8 207.7 L852.0 202.0 L853.2 202.4 L854.5 203.2 L855.8 206.2 L857.0 209.2 L858.2 210.4 L859.5 213.3 L860.8 204.1 L862.0 208.5 L863.2 210.2 L864.5 213.8 L865.8 208.4 L867.0 216.5 L868.2 212.4 L869.5 209.2 L870.8 207.4 L872.0 208.1 L873.2 208.6 L874.5 210.3 L875.8 211.3 L877.0 213.7 L878.2 214.5 L879.5 214.2 L880.8 213.7 L882.0 215.1 L883.2 216.5 L884.5 214.5 L885.8 212.2 L887.0 207.7 L888.2 205.2 L889.5 204.9 L890.8 205.4 L892.0 206.8 L893.2 208.7 L894.5 206.1 L895.8 207.8 L897.0 210.2 L898.2 212.6 L899.5 216.5 L900.8 216.8 L902.0 216.9 L903.2 213.4 L904.5 207.6 L905.8 200.7 L907.0 201.0 L908.2 202.4 L909.5 206.5 L910.8 201.5 L912.0 210.9 L913.2 210.6 L914.5 211.2 L915.8 213.6 L917.0 212.4 L918.2 216.1 L919.5 216.8 L920.8 212.2 L922.0 206.1 L923.2 204.2 L924.5 205.6 L925.8 207.1 L927.0 210.9 L928.2 213.0 L929.5 209.4 L930.8 210.3 L932.0 210.9 L933.2 213.0 L934.5 212.4 L935.8 211.6 L937.0 214.7 L938.2 211.0 L939.5 208.1 L940.8 207.9 L942.0 208.0 L943.2 211.2 L944.5 212.1 L945.8 213.8 L947.0 215.4 L948.2 212.2 L949.5 212.4 L950.8 214.1 L952.0 215.5 L953.2 216.2 L954.5 217.0 L955.8 213.7 L957.0 206.8 L958.2 200.7 L959.5 200.2 L960.8 201.3 L962.0 204.4 L962.0 258.9 L960.8 260.5 L959.5 263.2 L958.2 262.7 L957.0 256.5 L955.8 249.6 L954.5 245.5 L953.2 247.3 L952.0 247.7 L950.8 249.4 L949.5 250.0 L948.2 252.1 L947.0 248.5 L945.8 249.9 L944.5 250.2 L943.2 253.5 L942.0 255.0 L940.8 254.6 L939.5 254.0 L938.2 252.9 L937.0 247.1 L935.8 252.2 L934.5 249.8 L933.2 251.7 L932.0 251.0 L930.8 254.5 L929.5 254.5 L928.2 250.1 L927.0 251.9 L925.8 255.6 L924.5 256.1 L923.2 258.9 L922.0 256.9 L920.8 252.3 L919.5 247.7 L918.2 247.5 L917.0 250.9 L915.8 250.8 L914.5 251.7 L913.2 251.9 L912.0 252.4 L910.8 262.9 L909.5 255.7 L908.2 260.7 L907.0 261.5 L905.8 263.2 L904.5 254.9 L903.2 249.6 L902.0 246.3 L900.8 245.0 L899.5 246.2 L898.2 250.3 L897.0 251.9 L895.8 255.3 L894.5 256.4 L893.2 254.4 L892.0 257.6 L890.8 258.1 L889.5 258.6 L888.2 256.9 L887.0 257.2 L885.8 250.1 L884.5 247.4 L883.2 246.9 L882.0 249.2 L880.8 248.7 L879.5 249.8 L878.2 249.3 L877.0 249.4 L875.8 252.5 L874.5 254.0 L873.2 253.5 L872.0 254.7 L870.8 256.4 L869.5 255.3 L868.2 251.9 L867.0 247.6 L865.8 254.7 L864.5 249.9 L863.2 254.5 L862.0 254.6 L860.8 258.1 L859.5 250.5 L858.2 253.6 L857.0 253.8 L855.8 256.8 L854.5 258.9 L853.2 260.0 L852.0 262.1 L850.8 257.3 L849.5 249.6 L848.2 246.1 L847.0 249.7 L845.8 250.0 L844.5 253.3 L843.2 253.5 L842.0 253.5 L840.8 252.0 L839.5 252.7 L838.2 257.7 L837.0 257.2 L835.8 259.8 L834.5 257.0 L833.2 253.6 L832.0 246.1 L830.8 245.2 L829.5 247.9 L828.2 248.5 L827.0 250.3 L825.8 251.3 L824.5 253.0 L823.2 252.5 L822.0 263.2 L820.8 259.4 L819.5 258.8 L818.2 260.5 L817.0 257.7 L815.8 250.3 L814.5 245.9 L813.2 246.7 L812.0 248.8 L810.8 248.3 L809.5 246.6 L808.2 246.7 L807.0 248.0 L805.8 249.2 L804.5 252.2 L803.2 251.5 L802.0 255.3 L800.8 256.3 L799.5 254.7 L798.2 249.9 L797.0 245.7 L795.8 243.1 L794.5 246.4 L793.2 247.7 L792.0 248.1 L790.8 248.2 L789.5 248.4 L788.2 247.4 L787.0 250.2 L785.8 250.0 L784.5 254.2 L783.2 255.2 L782.0 254.7 L780.8 250.9 L779.5 248.7 L778.2 248.0 L777.0 244.0 L775.8 248.1 L774.5 248.5 L773.2 249.4 L772.0 249.9 L770.8 250.9 L769.5 251.0 L768.2 255.4 L767.0 253.8 L765.8 255.3 L764.5 250.5 L763.2 245.7 L762.0 245.2 L760.8 244.8 L759.5 246.6 L758.2 247.6 L757.0 249.3 L755.8 250.9 L754.5 248.6 L753.2 251.9 L752.0 254.8 L750.8 255.5 L749.5 255.2 L748.2 258.7 L747.0 260.0 L745.8 254.6 L744.5 251.4 L743.2 246.4 L742.0 248.8 L740.8 248.7 L739.5 246.5 L738.2 247.0 L737.0 249.8 L735.8 253.9 L734.5 257.1 L733.2 256.6 L732.0 261.1 L730.8 258.4 L729.5 257.9 L728.2 255.7 L727.0 249.5 L725.8 246.8 L724.5 249.3 L723.2 245.6 L722.0 246.9 L720.8 250.6 L719.5 251.3 L718.2 254.1 L717.0 258.2 L715.8 259.0 L714.5 260.3 L713.2 257.0 L712.0 254.6 L710.8 250.5 L709.5 244.4 L708.2 249.2 L707.0 247.7 L705.8 246.8 L704.5 248.6 L703.2 247.4 L702.0 248.6 L700.8 249.4 L699.5 253.7 L698.2 255.0 L697.0 256.6 L695.8 257.0 L694.5 254.2 L693.2 253.0 L692.0 250.6 L690.8 246.9 L689.5 248.3 L688.2 249.5 L687.0 250.6 L685.8 250.0 L684.5 250.3 L683.2 252.5 L682.0 256.4 L680.8 257.8 L679.5 261.3 L678.2 263.2 L677.0 260.3 L675.8 251.9 L674.5 247.8 L673.2 251.7 L672.0 249.7 L670.8 248.8 L669.5 252.0 L668.2 253.4 L667.0 252.3 L665.8 255.7 L664.5 257.8 L663.2 259.3 L662.0 259.1 L660.8 259.7 L659.5 258.1 L658.2 252.1 L657.0 247.5 L655.8 250.9 L654.5 252.5 L653.2 256.1 L652.0 255.5 L650.8 254.1 L649.5 253.2 L648.2 255.1 L647.0 263.2 L645.8 258.7 L644.5 259.7 L643.2 261.7 L642.0 261.7 L640.8 256.9 L639.5 250.3 L638.2 245.1 L637.0 247.4 L635.8 247.1 L634.5 248.3 L633.2 250.7 L632.0 249.1 L630.8 252.4 L629.5 256.1 L628.2 261.7 L627.0 260.0 L625.8 258.7 L624.5 255.4 L623.2 247.7 L622.0 248.8 L620.8 248.1 L619.5 251.6 L618.2 255.0 L617.0 256.4 L615.8 255.6 L614.5 251.2 L613.2 251.6 L612.0 254.0 L610.8 258.3 L609.5 259.7 L608.2 261.3 L607.0 259.5 L605.8 253.8 L604.5 247.3 L603.2 245.9 L602.0 243.7 L600.8 247.5 L599.5 248.0 L598.2 248.9 L597.0 247.2 L595.8 252.2 L594.5 255.6 L593.2 258.8 L592.0 259.4 L590.8 260.5 L589.5 254.9 L588.2 249.6 L587.0 243.8 L585.8 245.3 L584.5 244.2 L583.2 244.6 L582.0 247.0 L580.8 245.7 L579.5 248.3 L578.2 248.4 L577.0 261.6 L575.8 255.5 L574.5 258.0 L573.2 259.8 L572.0 257.0 L570.8 252.3 L569.5 244.7 L568.2 246.7 L567.0 247.5 L565.8 245.8 L564.5 244.1 L563.2 246.5 L562.0 250.9 L560.8 250.9 L559.5 256.5 L558.2 257.8 L557.0 260.4 L555.8 259.7 L554.5 259.5 L553.2 250.7 L552.0 245.5 L550.8 244.8 L549.5 244.0 L548.2 245.6 L547.0 248.2 L545.8 249.6 L544.5 248.9 L543.2 247.5 L542.0 251.8 L540.8 252.0 L539.5 257.1 L538.2 260.9 L537.0 258.4 L535.8 251.5 L534.5 247.1 L533.2 242.2 L532.0 243.8 L530.8 242.9 L529.5 246.1 L528.2 248.6 L527.0 248.7 L525.8 248.2 L524.5 246.3 L523.2 249.4 L522.0 252.2 L520.8 250.4 L519.5 254.4 L518.2 252.1 L517.0 243.8 L515.8 243.3 L514.5 244.0 L513.2 245.7 L512.0 246.2 L510.8 248.8 L509.5 250.7 L508.2 246.7 L507.0 253.3 L505.8 253.2 L504.5 257.6 L503.2 257.5 L502.0 256.0 L500.8 249.2 L499.5 247.2 L498.2 246.2 L497.0 247.9 L495.8 255.5 L494.5 247.2 L493.2 248.5 L492.0 248.4 L490.8 250.9 L489.5 255.0 L488.2 253.6 L487.0 258.2 L485.8 256.8 L484.5 252.3 L483.2 244.2 L482.0 243.4 L480.8 242.0 L479.5 244.4 L478.2 246.1 L477.0 245.2 L475.8 249.1 L474.5 248.6 L473.2 245.1 L472.0 249.2 L470.8 251.9 L469.5 253.6 L468.2 255.0 L467.0 255.1 L465.8 249.1 L464.5 245.4 L463.2 243.6 L462.0 244.6 L460.8 244.8 L459.5 246.7 L458.2 248.7 L457.0 246.9 L455.8 252.1 L454.5 254.9 L453.2 254.4 L452.0 257.4 L450.8 257.2 L449.5 251.3 L448.2 245.3 L447.0 243.9 L445.8 251.0 L444.5 247.9 L443.2 245.3 L442.0 245.5 L440.8 248.4 L439.5 249.3 L438.2 249.0 L437.0 248.6 L435.8 249.4 L434.5 254.7 L433.2 254.5 L432.0 248.0 L430.8 245.4 L429.5 244.9 L428.2 241.5 L427.0 247.0 L425.8 254.3 L424.5 253.5 L423.2 247.3 L422.0 252.1 L420.8 252.2 L419.5 256.0 L418.2 254.8 L417.0 257.0 L415.8 256.2 L414.5 254.2 L413.2 247.7 L412.0 243.3 L410.8 242.9 L409.5 243.3 L408.2 247.4 L407.0 250.1 L405.8 252.1 L404.5 249.8 L403.2 252.3 L402.0 255.5 L400.8 257.3 L399.5 260.3 L398.2 257.3 L397.0 254.2 L395.8 250.7 L394.5 246.1 L393.2 245.5 L392.0 245.9 L390.8 248.8 L389.5 252.3 L388.2 252.8 L387.0 254.4 L385.8 252.1 L384.5 254.9 L383.2 257.3 L382.0 258.6 L380.8 257.0 L379.5 256.5 L378.2 252.4 L377.0 249.5 L375.8 244.7 L374.5 246.5 L373.2 246.2 L372.0 248.9 L370.8 248.6 L369.5 250.0 L368.2 248.5 L367.0 251.5 L365.8 250.7 L364.5 255.1 L363.2 254.5 L362.0 255.5 L360.8 251.4 L359.5 249.1 L358.2 245.6 L357.0 248.7 L355.8 249.9 L354.5 253.8 L353.2 253.0 L352.0 248.0 L350.8 251.5 L349.5 253.0 L348.2 261.3 L347.0 255.2 L345.8 257.1 L344.5 254.4 L343.2 247.7 L342.0 246.5 L340.8 246.1 L339.5 244.8 L338.2 248.6 L337.0 250.3 L335.8 249.4 L334.5 257.5 L333.2 251.8 L332.0 254.3 L330.8 254.5 L329.5 258.2 L328.2 259.9 L327.0 259.2 L325.8 254.2 L324.5 249.4 L323.2 246.7 L322.0 248.0 L320.8 247.0 L319.5 247.7 L318.2 249.9 L317.0 250.6 L315.8 259.5 L314.5 255.6 L313.2 256.5 L312.0 258.0 L310.8 260.9 L309.5 261.8 L308.2 254.7 L307.0 250.2 L305.8 247.7 L304.5 254.1 L303.2 248.2 L302.0 248.3 L300.8 247.5 L299.5 248.3 L298.2 250.7 L297.0 253.5 L295.8 256.5 L294.5 259.1 L293.2 260.5 L292.0 256.0 L290.8 251.8 L289.5 245.9 L288.2 247.4 L287.0 244.9 L285.8 245.6 L284.5 246.4 L283.2 247.1 L282.0 248.3 L280.8 245.8 L279.5 249.1 L278.2 249.1 L277.0 251.1 L275.8 253.8 L274.5 255.4 L273.2 252.0 L272.0 248.2 L270.8 245.3 L269.5 245.4 L268.2 246.0 L267.0 248.8 L265.8 248.5 L264.5 250.4 L263.2 248.1 L262.0 250.9 L260.8 253.8 L259.5 256.5 L258.2 256.0 L257.0 255.2 Z" fill="#4c5691"/>
 <rect x="259.500" y="133.500" width="206" height="13" rx="4" fill="#9c3535" fill-opacity=".7"/>
</svg>
<div class="t" style="left:262.500px;top:134.500px;font-size:10.500px;font-weight:bold;color:#fff4f3;-webkit-text-stroke:.15px;transform:scaleX(0.8222)">abba_-_dancing_queen_-_abba_-_dancing_qu</div>
<div class="t" style="left:397px;top:204.500px;font-size:10.500px;font-weight:bold;color:#f6f7ff;-webkit-text-stroke:.15px;transform:scaleX(0.8178)">abba_-_dancing_queen_-_abba_-_dancing_qu</div>

<!-- drop zone -->
<svg class="abs" style="left:245px;top:266px" width="715" height="78" viewBox="245 266 715 78">
 <path d="M245 273H960M245 338H960" stroke="#57616b" stroke-width="1.400" stroke-dasharray="4.200 2.800"/>
 <path d="M604.300 295.500H612M608.150 291.600V299.400" stroke="#fff" stroke-width="1.700"/>
 <path d="M618.300 301V289.300l9-2.300v11.500" fill="none" stroke="#fff" stroke-width="1.900"/><ellipse cx="616.200" cy="301.500" rx="3" ry="2.500" fill="#fff"/><ellipse cx="625.200" cy="299" rx="3" ry="2.500" fill="#fff"/><path d="M617.350 288.500l10.900-2.800v3.200l-10.900 2.800Z" fill="#fff"/>
</svg>
<div class="t" style="left:500.500px;top:308.500px;font-size:12.500px;color:#eef0f2;-webkit-text-stroke:.2px;transform:scaleX(1.0434)">Drag and drop a loop or audio / MIDI file</div>

<!-- scrollbar right -->
<div class="abs" style="left:953px;top:163px;width:7px;height:180px;background:#aab2bb;opacity:.47;border-radius:4px 0 0 4px"></div>

<!-- playhead -->
<div class="abs" style="left:255.500px;top:112px;width:1.500px;height:232px;background:#fff"></div>
<svg class="abs" style="left:245px;top:100px" width="24" height="18" viewBox="245 100 24 18"><path d="M248 101.500H264.500L257.300 116.500a1 1 0 0 1-1.600 0Z" fill="#fff" stroke="#fff" stroke-width="1.500" stroke-linejoin="round"/></svg>

<!-- zoom buttons -->
<div class="abs" style="left:892px;top:82px;width:68px;height:34px;background:#1c2229;border:1px solid #363f4a;border-radius:5px 0 0 5px"></div>
<div class="abs" style="left:926px;top:82px;width:1px;height:34px;background:#323a45"></div>
<svg class="abs" style="left:892px;top:82px" width="68" height="34" viewBox="892 82 68 34">
 <circle cx="908.500" cy="97.500" r="4.800" fill="none" stroke="#fff" stroke-width="1.800"/><path d="M912 101.200L916.500 105.800" stroke="#fff" stroke-width="2.200"/><path d="M906 97.500H911" stroke="#fff" stroke-width="1.500"/>
 <circle cx="942.500" cy="97.500" r="4.800" fill="none" stroke="#fff" stroke-width="1.800"/><path d="M946 101.200L950.500 105.800" stroke="#fff" stroke-width="2.200"/><path d="M940 97.500H945M942.500 95V100" stroke="#fff" stroke-width="1.500"/>
</svg>

<!-- TRACK HEADERS -->
<div class="abs" style="left:0;top:110px;width:245px;height:16px;background:#1f252c"></div>
<div class="abs" style="left:0;top:110px;width:33.500px;height:16px;background:#252c34;border-right:1px solid #303842"></div>
<div class="abs" style="left:0;top:126px;width:245px;height:71px;background:#2c343e;border-top:1px solid #38414b;border-bottom:1px solid #191d22"></div>
<div class="abs" style="left:0;top:197px;width:245px;height:70px;background:#1c2128;border-bottom:1px solid #2a323b"></div>
<div class="abs" style="left:0;top:127px;width:33.500px;height:34px;background:#2d353f;border-right:1px solid #38414b;border-bottom:1px solid #38414b"></div>
<div class="abs" style="left:0;top:161px;width:33.500px;height:35px;background:#2d353f;border-right:1px solid #38414b"></div>
<div class="abs" style="left:0;top:197px;width:33.500px;height:34px;background:#1e242b;border-right:1px solid #2b333c;border-bottom:1px solid #2b333c"></div>
<div class="abs" style="left:0;top:231px;width:33.500px;height:35px;background:#1e242b;border-right:1px solid #2b333c"></div>
<div class="abs" style="left:0;top:267px;width:245px;height:76px;background:#1b2027"></div>
<div class="abs" style="left:242px;top:127px;width:3px;height:69px;background:#ff6262"></div>
<div class="t" style="left:11.500px;top:138px;font-size:12px;font-weight:bold;-webkit-text-stroke:0">M</div>
<div class="t" style="left:12px;top:173px;font-size:12px;font-weight:bold;-webkit-text-stroke:0">S</div>
<div class="t" style="left:11.500px;top:208px;font-size:12px;font-weight:bold;-webkit-text-stroke:0">M</div>
<div class="t" style="left:12px;top:243px;font-size:12px;font-weight:bold;-webkit-text-stroke:0">S</div>
<svg class="abs" style="left:0;top:126px" width="245" height="141" viewBox="0 126 245 141">
 <g><rect x="53.900" y="133.300" width="5.200" height="9.400" rx="2.600" fill="#fff"/><path d="M52.300 139.300a4.200 4.400 0 0 0 8.400 0" fill="none" stroke="#fff" stroke-width="1.500"/><path d="M56.500 144V147.800" stroke="#fff" stroke-width="1.700"/></g>
 <g transform="translate(0 70)"><rect x="53.900" y="133.300" width="5.200" height="9.400" rx="2.600" fill="#fff"/><path d="M52.300 139.300a4.200 4.400 0 0 0 8.400 0" fill="none" stroke="#fff" stroke-width="1.500"/><path d="M56.500 144V147.800" stroke="#fff" stroke-width="1.700"/></g>
 <circle cx="216.800" cy="139.800" r="1.700" fill="#fff"/><circle cx="221.900" cy="139.800" r="1.700" fill="#fff"/><circle cx="227" cy="139.800" r="1.700" fill="#fff"/>
 <rect x="48" y="177.200" width="123" height="5.500" rx="2.750" fill="#15191d"/><rect x="48" y="177.200" width="86" height="5.500" rx="2.750" fill="#0fb995"/><circle cx="132.900" cy="179.900" r="4.800" fill="#cfd8e0"/>
 <rect x="48" y="247.200" width="123" height="5.500" rx="2.750" fill="#121519"/><rect x="48" y="247.200" width="90" height="5.500" rx="2.750" fill="#6b7078"/>
 <circle cx="213.300" cy="176.300" r="8.700" fill="#343c46" stroke="#262d35" stroke-width="1"/><circle cx="213.300" cy="246.300" r="8.700" fill="#2a3139" stroke="#1c2228" stroke-width="1"/>
 <g fill="#7d858e"><circle cx="198.600" cy="176.200" r=".8"/><circle cx="200.700" cy="167.800" r=".8"/><circle cx="206.100" cy="162.400" r=".8"/><circle cx="198.600" cy="246.200" r=".8"/><circle cx="200.700" cy="237.800" r=".8"/><circle cx="206.100" cy="232.400" r=".8"/></g>
</svg>
<div class="t" style="left:71.200px;top:136px;font-size:12.500px;font-weight:bold;-webkit-text-stroke:.1px;transform:scaleX(0.9140)">abba_-_dancing_queen...</div>
<div class="t" style="left:71.200px;top:206px;font-size:12.500px;font-weight:bold;-webkit-text-stroke:.1px;transform:scaleX(0.9140)">abba_-_dancing_queen...</div>
<div class="t" style="left:199px;top:181px;font-size:7px;font-weight:bold;color:#cfd4d9">L</div>
<div class="t" style="left:199px;top:251px;font-size:7px;font-weight:bold;color:#cfd4d9">L</div>

<svg class="abs" style="left:220px;top:112px" width="16" height="10" viewBox="220 112 16 10"><circle cx="226.800" cy="117.800" r=".8" fill="#9aa1a8"/><circle cx="229.800" cy="117.800" r=".8" fill="#9aa1a8"/></svg>
<!-- add track header -->
<div class="abs" style="left:0;top:81px;width:245px;height:36px;background:#2c343e;box-shadow:0 1px 3px rgba(0,0,0,.35);border-top:1px solid #363f49"></div>
<svg class="abs" style="left:0;top:81px" width="245" height="33" viewBox="0 81 245 33">
 <path d="M10 98.200H21.900M15.950 92.300V104.100" stroke="#fff" stroke-width="2.900"/>
 <rect x="206.500" y="86.500" width="33.500" height="24.500" rx="3.500" fill="#1c2229" stroke="#363f4a"/>
 <path d="M214 101.400H220.500L226.700 95H233.200" fill="none" stroke="#fff" stroke-width="1.400"/><circle cx="220.700" cy="101.300" r="2.400" fill="#fff"/><circle cx="226.700" cy="95" r="2.400" fill="#fff"/>
</svg>
<div class="t" style="left:26.300px;top:93px;font-size:12px;-webkit-text-stroke:.4px;transform:scaleX(0.9861)">Add track</div>
<!-- BOTTOM PANEL -->
<div class="abs" style="left:0;top:342.500px;width:960px;height:29px;background:#2c343e;border-top:1px solid #343c47;border-bottom:1px solid #38414c"></div>
<div class="abs" style="left:0;top:371.500px;width:960px;height:214px;background:#2c343e"></div>
<div class="abs" style="left:245px;top:371.500px;width:586px;height:210px;background:#14181c"></div>
<div class="abs" style="left:333px;top:375px;width:413px;height:202.500px;background:#2a323c;border-radius:3px"></div>
<div class="abs" style="left:333px;top:375px;width:413px;height:25px;background:#2a323c;border-bottom:1px solid #222930;border-radius:3px 3px 0 0"></div>
<div class="t" style="left:396px;top:381px;font-size:12px;color:#cfd4d9">t</div>
<svg class="abs" style="left:0;top:343px" width="960" height="242" viewBox="0 343 960 242">
 <path d="M11.300 353.300L20.700 362.300M20.700 353.300L11.300 362.300" stroke="#fff" stroke-width="2.700"/>
 <path d="M30.300 356.300V353.300H33.500M37 353.300H40.300V356.300M40.300 359.300V362.300H37M33.500 362.300H30.300V359.300" fill="none" stroke="#fff" stroke-width="2.100"/>
 <!-- level meter -->
 <defs><linearGradient id="lv" x1="0" y1="0" x2="0" y2="1"><stop offset="0" stop-color="#e64a19"/><stop offset=".1" stop-color="#ee8a1a"/><stop offset=".25" stop-color="#e0c61a"/><stop offset=".4" stop-color="#a8c424"/><stop offset=".55" stop-color="#3fa83c"/><stop offset=".72" stop-color="#0f937a"/><stop offset="1" stop-color="#0b8f80"/></linearGradient></defs>
 <rect x="429.600" y="457.500" width="6.600" height="73" rx="3.300" fill="url(#lv)"/><circle cx="432.700" cy="451.300" r="3.500" fill="#ff3410"/>
 <!-- laptop -->
 <rect x="476.250" y="448.750" width="114.500" height="71.250" fill="none" stroke="#8e9092" stroke-width="2.500"/>
 <rect x="460" y="524.250" width="147" height="6.500" rx="1.500" fill="#8e9092"/><path d="M521.250 524.250H545V525.600a1.200 1.200 0 0 1-1.200 1.200H522.450a1.200 1.200 0 0 1-1.200-1.200Z" fill="#2a323c"/>
 <path d="M500.50 484.00V486.00M504.90 484.00V486.00M509.50 474.00V496.00M514.25 463.50V506.50M519.00 467.00V503.00M523.25 472.50V497.50M527.50 477.50V492.50M531.75 480.25V489.75M536.00 479.50V490.50M540.25 482.00V488.00M544.25 484.00V486.00M548.50 484.00V486.00M552.50 484.00V486.00M556.75 484.00V486.00M560.75 484.00V486.00M565.00 484.00V486.00" stroke="#8e9092" stroke-width="1.800"/>
 <!-- mic big -->
 <rect x="620" y="478.750" width="22" height="39.500" rx="11" fill="#8e9092"/>
 <g stroke="#2a323c" stroke-width="1.300"><path d="M622.500 490H639.500M622.500 493.300H639.500M622.500 496.600H639.500M622.500 499.900H639.500M622.500 503.200H639.500"/></g>
 <path d="M617.250 501.500V506.500a13.750 13.750 0 0 0 27.500 0V501.500" fill="none" stroke="#8e9092" stroke-width="2"/><path d="M631 520.500V529.500M623.750 530H638.750" stroke="#8e9092" stroke-width="1.900"/>
 <!-- fader -->
 <path d="M872.500 378.7H883.500M910 378.7H921M872.500 413.6H883.500M910 413.6H921M872.500 440.2H883.500M910 440.2H921M872.500 460.5H883.500M910 460.5H921M872.500 475.4H883.500M910 475.4H921M872.500 487.2H883.500M910 487.2H921M872.500 495.6H883.500M910 495.6H921M872.500 500.4H883.500M910 500.4H921" stroke="#3b444f" stroke-width="1"/>
 <rect x="892.100" y="378.300" width="9" height="123" rx="1.800" fill="#14181c"/>
 <rect x="892.100" y="424" width="9" height="77.300" rx="1.800" fill="#08ba97"/>
 <rect x="888.600" y="402.800" width="15.600" height="24" rx="3" fill="#414953" stroke="#2a3139" stroke-width=".8"/>
 <path d="M892.800 410H901M892.800 413.600H901M892.800 417.200H901" stroke="#e1e6eb" stroke-width="1.600"/>
 <!-- knobs -->
 <defs><linearGradient id="kn" x1="0" y1="0" x2="0" y2="1"><stop offset="0" stop-color="#3b444e"/><stop offset="1" stop-color="#272e36"/></linearGradient></defs>
 <circle cx="860.900" cy="544.700" r="13.300" fill="#1e242a" opacity=".7"/><circle cx="923.900" cy="544.700" r="13.300" fill="#1e242a" opacity=".7"/>
 <circle cx="860.900" cy="543.600" r="13" fill="url(#kn)"/><path d="M860.900 532V540.800" stroke="#fff" stroke-width="2.200" stroke-linecap="round"/>
 <g fill="#8a929b"><circle cx="839.300" cy="544.600" r=".8"/><circle cx="842.700" cy="533" r=".8"/><circle cx="850" cy="525.700" r=".8"/><circle cx="861" cy="522.300" r=".8"/><circle cx="872" cy="525.700" r=".8"/><circle cx="879" cy="533" r=".8"/><circle cx="882" cy="544.600" r=".8"/></g>
 <circle cx="923.900" cy="543.600" r="13" fill="url(#kn)"/><path d="M913.300 550.100L921.300 545.900" stroke="#fff" stroke-width="2.200" stroke-linecap="round"/>
</svg>
<div class="t" style="left:52.300px;top:351.700px;font-size:12px;-webkit-text-stroke:.35px;transform:scaleX(0.9740)">Drum machine</div>
<div class="t" style="left:7.300px;top:386.700px;font-size:12px;-webkit-text-stroke:.35px;transform:scaleX(1.0673)">Input</div>
<div class="abs" style="left:6px;top:407px;width:239px;height:27px;background:#1c2229;border:1px solid #363f4a;border-radius:4px 0 0 4px"></div>
<div class="abs" style="left:6px;top:440.500px;width:239px;height:26.500px;background:#1c2229;border:1px solid #363f4a;border-radius:4px 0 0 4px"></div>
<div class="abs" style="left:6px;top:473.800px;width:90.800px;height:26.200px;background:#1c2229;border:1px solid #363f4a;border-radius:4px"></div>
<div class="t" style="left:18px;top:414.700px;font-size:12px;-webkit-text-stroke:.25px;transform:scaleX(0.9605)">Default - Microphone (Realtek (R) Au…</div>
<div class="t" style="left:18px;top:448.300px;font-size:12px;-webkit-text-stroke:.25px;transform:scaleX(0.9320)">Channel 1</div>
<div class="t" style="left:33.200px;top:481px;font-size:12px;-webkit-text-stroke:.35px;transform:scaleX(1.0084)">Monitoring</div>
<svg class="abs" style="left:10px;top:478px" width="24" height="18" viewBox="10 478 24 18"><circle cx="21.100" cy="485.200" r="2.700" fill="#fff"/><path d="M16.600 485.500a4.500 4.500 0 0 0 9 0" fill="none" stroke="#fff" stroke-width="1.400"/><path d="M14.200 485a6.900 6.900 0 0 0 13.800 0" fill="none" stroke="#fff" stroke-width="1.600"/></svg>
<div class="t" style="left:840.500px;top:549.500px;font-size:10px;font-weight:bold;-webkit-text-stroke:0">L</div>
<div class="t" style="left:876.800px;top:549.500px;font-size:10px;font-weight:bold;-webkit-text-stroke:0;transform:scaleX(.85)">R</div>
<div class="t" style="left:840.500px;top:564.800px;font-size:8.600px;transform:scaleX(0.8713)">PANORAMA</div>
<div class="t" style="left:893.500px;top:564.800px;font-size:8.600px;transform:scaleX(0.8408)">REVERBERATION</div>

<!-- BOTTOM BAR -->
<div class="abs" style="left:0;top:581px;width:960px;height:34px;background:#2c343e;border-top:1px solid #353d48"></div>
<div class="bb" style="left:6.500px;width:54.500px;background:#0db896;border-color:#0db896;border-radius:4px 0 0 4px"></div>
<div class="bb" style="left:60.500px;width:65px"></div>
<div class="bb" style="left:124.500px;width:63px;border-radius:0 4px 4px 0"></div>
<div class="bb" style="left:538.500px;width:131.500px;border-radius:4px 0 0 4px"></div>
<div class="bb" style="left:669px;width:86px"></div>
<div class="bb" style="left:754px;width:97.500px"></div>
<div class="bb" style="left:850.500px;width:104px;border-radius:0 4px 4px 0"></div>
<svg class="abs" style="left:0;top:582px" width="960" height="33" viewBox="0 582 960 33">
 <rect x="18" y="594" width="4.600" height="7.500" rx="2.300" fill="#e8fbf6"/><path d="M16.700 599a3.600 3.600 0 0 0 7.200 0" fill="none" stroke="#e8fbf6" stroke-width="1.100"/><path d="M20.300 602.500V605" stroke="#e8fbf6" stroke-width="1.200"/>
 <path d="M133.500 597H141M133.500 599.800H139.500M133.500 602.600H137.500" stroke="#fff" stroke-width="1.500"/><path d="M139.500 603.500L141 600L145.500 595.500L147 597L142.500 601.500Z" fill="#fff"/>
 <path d="M547.500 604.800L550 599.500C551.500 596.300 554.800 594.500 559 594.200C558.800 598.300 556.500 601.300 552.800 602.300L550.500 602.600Z" fill="#fff"/><path d="M548 604.500L555.500 597.500" stroke="#1c2229" stroke-width=".8"/>
 <path d="M678.300 599.300c0-1.800 1.300-2.800 2.700-2.800 2.500 0 3.700 5.600 6.200 5.600 1.400 0 2.700-1 2.700-2.800s-1.300-2.800-2.700-2.800c-2.500 0-3.700 5.600-6.200 5.600-1.400 0-2.700-1-2.700-2.800Z" fill="none" stroke="#fff" stroke-width="1.500"/>
 <g fill="#fff"><circle cx="768.500" cy="597.300" r="2.400"/><path d="M764.300 603.800a4.200 3.800 0 0 1 8.400 0Z"/><circle cx="764.200" cy="597.800" r="1.700"/><circle cx="772.800" cy="597.800" r="1.700"/><path d="M762 602.800a3 3 0 0 1 3.500-2.800l-1.800 2.800ZM775 602.800a3 3 0 0 0-3.500-2.800l1.800 2.800Z"/></g>
 <rect x="858.800" y="596.300" width="13.400" height="6" rx="1" fill="#fff"/>
</svg>
<div class="t" style="left:31.700px;top:594.600px;font-size:12.500px;color:#e8fbf6;-webkit-text-stroke:.2px;transform:scaleX(0.9155)">Tool</div>
<div class="t" style="left:68.800px;top:595.300px;font-size:11.500px;font-weight:bold;font-style:italic;-webkit-text-stroke:0;transform:scaleX(0.8941)">Fx</div>
<div class="t" style="left:84.400px;top:594.600px;font-size:12.500px;-webkit-text-stroke:.35px;transform:scaleX(0.9083)">Effects</div>
<div class="t" style="left:150.400px;top:594.600px;font-size:12.500px;-webkit-text-stroke:.35px;transform:scaleX(0.9340)">Editor</div>
<div class="t" style="left:563.500px;top:594.800px;font-size:12.500px;-webkit-text-stroke:.35px;transform:scaleX(0.8977)">Lyrics / Sheet Music</div>
<div class="t" style="left:695px;top:594.800px;font-size:12.500px;-webkit-text-stroke:.35px;transform:scaleX(0.9190)">Magnifiers</div>
<div class="t" style="left:779px;top:594.800px;font-size:12.500px;-webkit-text-stroke:.35px;transform:scaleX(0.9693)">Contributors</div>
<div class="t" style="left:876px;top:594.800px;font-size:12.500px;-webkit-text-stroke:.35px;transform:scaleX(0.9253)">MIDI mapping</div>
<div class="t" style="left:860px;top:596.800px;font-size:5.500px;font-weight:bold;color:#1c2229;-webkit-text-stroke:0;transform:scaleX(0.9462)">MIDI</div>

<!-- CONTEXT MENU -->
<div class="abs menu"></div>
<div class="abs" style="left:212px;top:224.500px;width:184px;height:65px;background:#f2f5f8"></div>
<div class="sep" style="top:223.800px"></div><div class="sep" style="top:289.300px"></div><div class="sep" style="top:360px"></div><div class="sep" style="top:431px"></div>
<div class="mi" style="top:164.5px;transform:scaleX(0.8931)">Rename</div>
<div class="mi" style="top:199.5px;transform:scaleX(0.8925)">Freeze track</div>
<div class="mi" style="top:236.0px;transform:scaleX(0.9121)">Change track color</div>
<div class="dot" style="left:226.70px;background:#fb5f5f"></div>
<div class="dot" style="left:253.45px;background:#07a4df"></div>
<div class="dot" style="left:280.20px;background:#7a86d6"></div>
<div class="dot" style="left:306.95px;background:#e462c4"></div>
<div class="dot" style="left:333.70px;background:#9ccb4e"></div>
<div class="dot" style="left:360.45px;background:#f3b91d"></div>
<svg class="abs" style="left:226.700px;top:259.400px" width="22" height="22" viewBox="0 0 21.400 21.400"><path d="M6.200 11.200L9.400 14.300 15.600 7.700" fill="none" stroke="#fff" stroke-width="2.200"/></svg>
<div class="mi" style="top:301.3px;transform:scaleX(0.8937)">Preset</div>
<svg class="abs" style="left:377px;top:303px" width="10" height="12" viewBox="0 0 10 12"><path d="M1.500 1.500V10L8.500 5.800Z" fill="#66749a"/></svg>
<div class="mi" style="top:336.3px;transform:scaleX(0.9428)">Enable multitrack recording</div>
<div class="mi" style="top:372.3px;transform:scaleX(0.9051)">Move up</div>
<div class="mi" style="top:407.3px;transform:scaleX(0.9165)">Move down</div>
<div class="mi" style="top:443.0px;transform:scaleX(0.9631)">Import from disk</div>
<div class="mi" style="top:478.0px;transform:scaleX(0.8848)">Export track as WAV</div>
<div class="mi" style="top:513.0px;transform:scaleX(0.9361)">Duplicate track</div>
<div class="mi" style="top:548.0px;transform:scaleX(0.9235)">Delete track</div>

</body></html>
